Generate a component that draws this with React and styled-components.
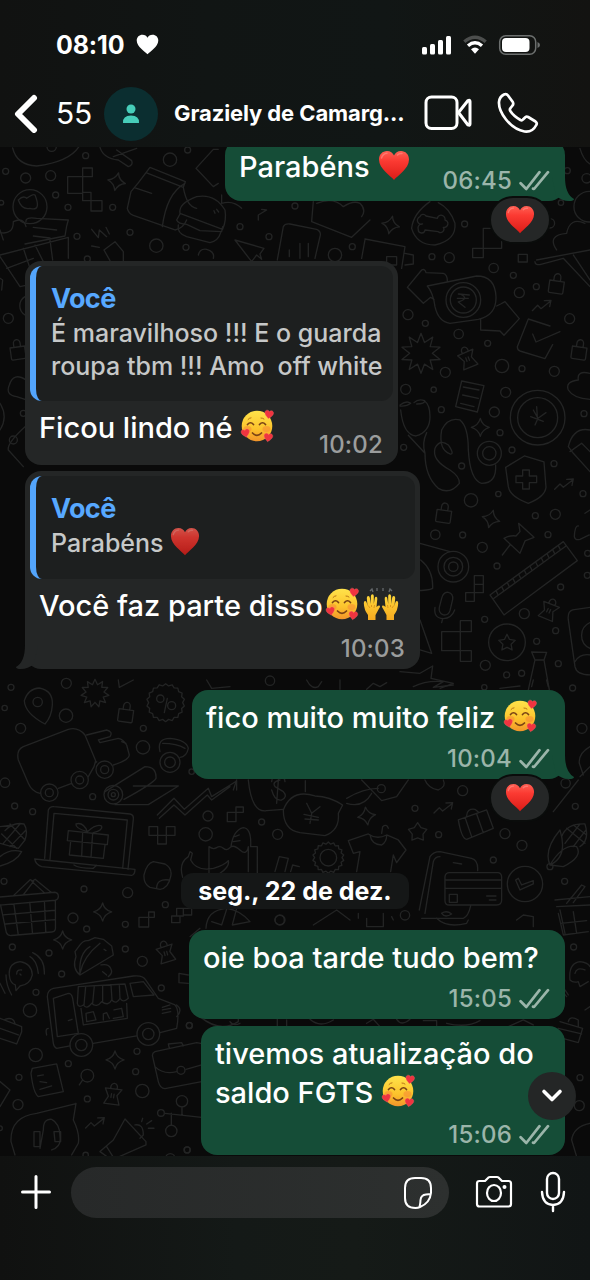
import styled, { createGlobalStyle } from "styled-components";

const GlobalStyle = createGlobalStyle`
  * {
    box-sizing: border-box;
  }
  body {
    margin: 0;
    background: #0a0a0a;
    font-family: Inter, "Noto Sans", sans-serif;
    color: white;
  }
  svg {
    display: block;
    flex: none;
  }
`;

const Screen = styled.div`
  width: 590px;
  height: 1280px;
  display: flex;
  flex-direction: column;
  overflow: hidden;
`;

const Header = styled.header`
  height: 147px;
  background: linear-gradient(90deg, #111211 0%, #111514 35%, #111615 65%, #131311 100%);
`;
const StatusBar = styled.div`
  height: 78px;
  padding: 11px 49px 0 56px;
  display: flex;
  align-items: center;
`;
const Clock = styled.span`
  width: 80px;
  font-size: 25px;
  font-weight: 700;
  letter-spacing: -0.15px;
`;
const StatusIcons = styled.div`
  margin-left: auto;
  display: flex;
  align-items: center;
  gap: 11px;
`;
const NavBar = styled.div`
  height: 69px;
  padding: 0 38px 0 14px;
  display: flex;
  align-items: center;
`;
const UnreadCount = styled.span`
  width: 49px;
  margin-left: 17px;
  font-size: 30px;
  letter-spacing: -0.2px;
`;
const Avatar = styled.div`
  width: 54px;
  height: 54px;
  margin: 2px 0 0 -1px;
  border-radius: 50%;
  background: #0b2e30;
  display: flex;
  align-items: center;
  justify-content: center;
`;
const ContactName = styled.h1`
  width: 236px;
  margin: 0 14px 0 16px;
  font-size: 22px;
  font-weight: 700;
  letter-spacing: -0.1px;
  white-space: nowrap;
`;

const Chat = styled.main`
  position: relative;
  height: 1009px;
  overflow: hidden;
  background: #0a0a0a;
`;
const Backdrop = styled.svg`
  position: absolute;
  top: -147px;
  left: 0;
  fill: none;
  stroke: #232424;
  stroke-width: 4;
  stroke-linecap: round;
  stroke-linejoin: round;
`;
const Messages = styled.div`
  position: relative;
  padding: 0 25px;
  display: flex;
  flex-direction: column;
`;
const Bubble = styled.div`
  position: relative;
  width: ${(props) => props.$width}px;
  height: ${(props) => props.$height}px;
  margin-top: ${(props) => props.$gap}px;
  align-self: ${(props) => (props.$sent ? "flex-end" : "flex-start")};
  background: ${(props) => (props.$sent ? "#154d37" : "#242626")};
  border-radius: 16px;
  padding: ${(props) => (props.$sent ? "0" : "5px 5px 0")};
  display: flex;
  flex-direction: column;
`;
const Body = styled.div`
  flex: 1;
  display: flex;
  flex-direction: ${(props) => (props.$inline ? "row" : "column")};
  justify-content: space-between;
  padding: ${(props) => (props.$sent ? "8px 15px 5px 14px" : "7px 10px 5px 9px")};
`;
const Text = styled.p`
  margin: 0;
  font-size: ${(props) => props.$size || 29}px;
  line-height: 39px;
  font-weight: 500;
  letter-spacing: ${(props) => props.$spacing || 0}px;
  white-space: pre;
`;
const Meta = styled.div`
  align-self: flex-end;
  display: flex;
  align-items: center;
  gap: 7px;
  height: 30px;
  line-height: 30px;
  font-size: 24px;
  font-weight: 500;
  letter-spacing: 0.2px;
  color: ${(props) => (props.$sent ? "#9bb5aa" : "#9b9d9d")};
`;
const Quote = styled.div`
  height: ${(props) => props.$height}px;
  padding: 14px 0 0 15px;
  border-left: 6px solid #53a5fc;
  border-radius: 12px;
  background: #1d1f1f;
`;
const QuoteAuthor = styled.div`
  font-size: 27px;
  line-height: 37px;
  font-weight: 700;
  letter-spacing: -0.6px;
  color: #57a8ff;
`;
const QuoteText = styled.div`
  font-size: 25px;
  line-height: 33px;
  font-weight: 500;
  letter-spacing: ${(props) => props.$spacing || 0}px;
  color: #c6c8c8;
  white-space: pre;
`;
const Reaction = styled.div`
  position: absolute;
  right: 14px;
  top: calc(100% - 5px);
  width: 62px;
  height: 48px;
  border: 2px solid #0a0c0b;
  border-radius: 24px;
  background: #252727;
  display: flex;
  align-items: center;
  justify-content: center;
`;
const SentTail = styled.svg`
  position: absolute;
  right: -9px;
  bottom: 0;
  fill: #154d37;
`;
const ReceivedTail = styled.svg`
  position: absolute;
  left: -9px;
  bottom: 0;
  fill: #242626;
`;
const DateChip = styled.div`
  align-self: center;
  width: 228px;
  height: 36px;
  margin: 94px 0 0;
  border-radius: 12px;
  background: #151717;
  line-height: 36px;
  text-align: center;
  font-size: 25px;
  font-weight: 700;
  letter-spacing: 0;
  white-space: nowrap;
`;
const ScrollDown = styled.button`
  position: absolute;
  right: 14px;
  top: 925px;
  width: 48px;
  height: 48px;
  padding: 0;
  border: none;
  border-radius: 50%;
  background: #242626;
  display: flex;
  align-items: center;
  justify-content: center;
`;
const InlineIcon = styled.span`
  display: inline-block;
  vertical-align: ${(props) => props.$drop || -5}px;
  opacity: ${(props) => (props.$dim ? 0.8 : 1)};
  margin-left: ${(props) => props.$left || 0}px;
`;

const Composer = styled.footer`
  height: 124px;
  padding: 11px 24px 0 20px;
  display: flex;
  align-items: flex-start;
  background: linear-gradient(90deg, #101110 0%, #141917 40%, #151a17 60%, #111515 100%);
`;
const Field = styled.div`
  width: 378px;
  height: 51px;
  margin: 0 26px 0 19px;
  padding-right: 16px;
  border-radius: 26px;
  background: linear-gradient(90deg, #272929, #2d302f);
  display: flex;
  align-items: center;
  justify-content: flex-end;
`;
const Tool = styled.div`
  height: 50px;
  margin-right: ${(props) => props.$right || 0}px;
  display: flex;
  align-items: center;
`;

const heartPath = "M16 30C13 26 1 19 1 9.5C1 4.5 4.5 1 9 1C12.3 1 14.8 2.8 16 5.5C17.2 2.8 19.7 1 23 1C27.5 1 31 4.5 31 9.5C31 19 19 26 16 30Z";

const Heart = ({ size = 32 }) => (
  <svg width={size} height={size} viewBox="0 0 32 32" role="img" aria-label="❤️">
    <defs>
      <linearGradient id="heartFill" x1="0" y1="0" x2="0" y2="1">
        <stop offset="0" stopColor="#ff6054" />
        <stop offset="0.35" stopColor="#fb3a32" />
        <stop offset="1" stopColor="#dc1c17" />
      </linearGradient>
    </defs>
    <path d={heartPath} fill="url(#heartFill)" />
    <path d="M3.5 8Q5 3.5 9 3.3M19.5 5Q21 3.3 24 3.5" stroke="#ff9189" strokeWidth="1.5" fill="none" strokeLinecap="round" opacity=".6" />
  </svg>
);

const LovingFace = () => (
  <svg width="34" height="34" viewBox="0 0 34 34" role="img" aria-label="🥰">
    <defs>
      <linearGradient id="faceFill" x1="0" y1="0" x2="0" y2="1">
        <stop offset="0" stopColor="#ffe34b" />
        <stop offset="0.6" stopColor="#fcc32c" />
        <stop offset="1" stopColor="#f2942a" />
      </linearGradient>
    </defs>
    <circle cx="17" cy="17" r="15.3" fill="url(#faceFill)" />
    <ellipse cx="7.5" cy="20" rx="4" ry="3" fill="#f77c37" opacity=".45" />
    <ellipse cx="26.5" cy="20" rx="4" ry="3" fill="#f77c37" opacity=".45" />
    <path d="M7.5 15.5Q10.5 12 13.5 15.5M19.5 15.5Q22.5 12 25.5 15.5M12.5 24Q17 28.5 21.5 24" stroke="#7a4315" strokeWidth="1.7" fill="none" strokeLinecap="round" />
    <path d="M8 10.5Q9 9 11 8.8M21 9Q23 9 24 10" stroke="#b87316" strokeWidth="1" fill="none" strokeLinecap="round" />
    <g fill="#ef3440" stroke="#ff7670" strokeWidth="1">
      <path d={heartPath} transform="translate(25 .5) rotate(8) scale(.29)" />
      <path d={heartPath} transform="translate(.3 21) rotate(-12) scale(.28)" />
      <path d={heartPath} transform="translate(24.2 23.5) rotate(8) scale(.29)" />
    </g>
  </svg>
);

const RaisedHands = () => (
  <svg width="36" height="34" viewBox="0 0 36 34" role="img" aria-label="🙌">
    <defs>
      <linearGradient id="handFill" x1="0" y1="0" x2="0" y2="1">
        <stop offset="0" stopColor="#ffd83b" />
        <stop offset="1" stopColor="#f5a91f" />
      </linearGradient>
      <g id="hand">
        <path d="M5 33V28Q1 23 .8 16Q.8 14 2.2 14Q3.4 14 3.8 16L4.5 19L3.8 11Q3.8 9 5.3 9Q6.6 9 6.9 11L7.6 17L7.9 9Q8.1 7.3 9.4 7.3Q10.8 7.4 10.8 9L10.8 17L11.8 11Q12.2 9.6 13.3 9.8Q14.5 10 14.3 12L13.5 20L15 18.8Q16.5 18 17 19Q17.3 20 15.8 22L12.5 28V33Z" fill="url(#handFill)" />
        <path d="M5.2 18.5L7 21M8.5 18V20M11.5 18L11 21" stroke="#d58c17" strokeWidth=".8" fill="none" />
      </g>
    </defs>
    <use href="#hand" />
    <use href="#hand" transform="translate(36 0) scale(-1 1)" />
    <path d="M7 4L9 2L10 5M14 1V4M20 4V1M26 5L27 2L29 4" stroke="#65696c" strokeWidth="1.3" fill="none" />
  </svg>
);

const Ticks = () => (
  <svg width="31" height="22" viewBox="0 0 31 22" fill="none" stroke="currentColor" strokeWidth="2.7" strokeLinecap="round" strokeLinejoin="round">
    <path d="M1.6 13.2L7.3 19L20.5 2.2M14 18.7L15 19L29 2.2" />
  </svg>
);

const Dots = ({ items }) => items.map(([x, y, r]) => <circle key={`${x}-${y}`} cx={x} cy={y} r={r} />);

const star = (cx, cy, points, outer, inner) => {
  let d = "";
  for (let i = 0; i < points * 2; i++) {
    const r = i % 2 ? inner : outer;
    const a = (Math.PI * i) / points - Math.PI / 2;
    d += `${i ? "L" : "M"}${(cx + r * Math.cos(a)).toFixed(1)} ${(cy + r * Math.sin(a)).toFixed(1)}`;
  }
  return d + "Z";
};

const at = (x, y, r = 0) => `translate(${x} ${y}) rotate(${r})`;

const Sparkle = ({ x, y, r }) => (
  <path transform={at(x, y, r)} d="M0-27Q5-6 27 0Q6 6 0 27Q-6 6-27 0Q-6-6 0-27Z" />
);
const Lock = ({ x, y, r = 8 }) => (
  <path transform={at(x, y, r)} d="M-22-9H22V24Q22 28 18 28H-18Q-22 28-22 24ZM-10-9V-20A10 11 0 0 1 10-20V-9" />
);
const Clip = ({ x, y, r = 10 }) => (
  <path transform={at(x, y, r)} d="M-25-17L25-20L13 0L24 27L-22 29L-12 6ZM-9-19A10 12 0 1 1 10-20M-4-3V8M4-3V8" />
);
const Trend = ({ x, y }) => <path transform={at(x, y)} d="M-28 14L-12-2L-2 8L26-14M8-16L28-17L24 2" />;

const Basket = ({ x, y, r = -5 }) => (
  <path
    transform={at(x, y, r)}
    d="M-80-30H95Q105-28 105-18T95-6H-80M-70-6L-60 78Q-56 88-46 88H76Q86 88 88 78L95-6M-65 24H92M-60 52H88M-30-6L-25 88M18-6V88M62-6L58 88M-30-30L25-74L35-68L0-30M85-30L40-74L30-68L65-30"
  />
);

const DoodlesTop = () => (
  <g transform="translate(0 140) scale(.3333)">
    <Dots
      items={[
        [155, 20, 14], [257, 47, 9], [17, 94, 9], [77, 114, 15], [152, 107, 15], [167, 165, 9], [204, 202, 9],
        [338, 202, 9], [510, 59, 20], [563, 30, 9], [390, 277, 9], [231, 289, 9], [469, 317, 20], [558, 322, 9],
        [720, 260, 9], [807, 290, 9], [262, 357, 9], [25, 535, 15], [70, 820, 9], [4, 188, 7], [40, 900, 12],
        [885, 198, 9], [1210, 62, 9], [1394, 252, 9], [1005, 345, 20], [1057, 320, 9], [1296, 350, 9], [1348, 353, 15],
        [1702, 92, 9], [1760, 115, 14], [1683, 188, 8], [1650, 250, 14],
      ]}
    />
    <path d="M38 24Q50 75 110 78Q210 65 238 18M300 22Q310 55 355 60L385 80Q400 75 395 62L350 30M340 50L410 25" />
    <path d="M248 84H277V110H248ZM203 110H248V160H203ZM248 157H273V182H248ZM273 182H306V213H273Z" />
    <Sparkle x={350} y={125} r={12} />
    <path d="M450 82L556 125L550 142L438 98ZM438 98Q415 130 393 155L382 205Q385 220 400 226L525 270Q550 265 560 240M550 142Q560 200 590 205M403 143L455 160M555 130Q500 160 487 260" />
    <path d="M540 220Q535 190 590 170Q645 160 675 210Q680 240 668 268ZM540 222L530 240Q535 252 560 253L600 272L665 275L668 260M535 255Q530 280 560 290L630 308Q655 303 662 278M650 208L656 216M642 212L645 220" />
    <circle cx="90" cy="200" r="51" />
    <path d="M55 180Q70 165 80 175Q100 160 105 165Q125 215 90 205Q65 210 55 180M0 278Q40 285 40 245Q70 230 78 260M78 245Q75 230 110 235L205 240L200 258L195 288L75 312M100 262L170 270M100 288L150 294M0 345L205 292V355M70 325L105 430L60 440L0 350M105 315L130 365M150 300L158 360M20 385L100 355" />
    <path d="M275 268L295 293L298 270L320 290M318 262L328 282M275 318L298 322M312 330L345 305L370 335V362M312 330L330 362M595 345Q600 325 620 328Q645 335 640 355" />
    <path d="M655 28L640 28L588 85L640 140L655 130M665 165V190Q700 180 725 205M775 240V225L800 210L785 208M705 300L792 325L780 342L785 358L770 345L755 365ZM832 360L850 260Q855 250 870 252L950 268Q965 275 960 290L945 355M868 350V330M900 355V310M925 350V310" />
    <path d="M940 185L935 245L1055 292L1110 240M950 190Q1000 170 1030 200Q1060 180 1080 190Q1100 210 1085 230M1095 300L1085 355M1095 297L1215 320L1205 385M1160 350H1190V375H1160ZM1215 340L1240 345V372L1215 375" />
    <Sparkle x={1172} y={255} r={12} />
    <path d="M1290 185Q1240 220 1235 265Q1250 315 1305 315Q1370 300 1365 250Q1350 205 1315 188" />
    <path d="M1260 230A10 10 0 0 1 1278 228L1312 235A10 10 0 0 1 1335 240A10 10 0 0 1 1330 262A10 10 0 0 1 1315 275L1275 270A10 10 0 0 1 1255 268A12 12 0 0 1 1268 252A10 10 0 0 1 1260 230ZM1450 265V325H1505V265ZM1418 325H1450V353H1418ZM1555 343H1582V366H1555Z" />
    <circle cx="1768" cy="200" r="46" />
    <path d="M1670 330Q1640 285 1700 280Q1710 230 1755 250M1610 360L1770 330M1605 365Q1605 375 1620 374L1690 355L1770 440M1720 345L1770 420M1740 25Q1750 60 1770 72" />
    <path d="M0 270L10 300M0 415L8 420L5 450M75 470A32 32 0 0 0 75 525M78 720Q40 695 28 735Q15 765 50 770L75 778M0 790Q25 830 0 870M75 860Q20 910 25 930L70 980" />
    <Lock x={53} y={630} r={-8} />
  </g>
);

const DoodlesRight = () => (
  <g transform="translate(400 250) scale(.3333)">
    <Dots
      items={[
        [281, 54, 14], [340, 76, 9], [358, 128, 15], [409, 110, 9], [24, 194, 15], [76, 220, 9], [176, 252, 14],
        [263, 280, 9], [509, 206, 15], [306, 348, 20], [136, 367, 15], [366, 356, 9], [463, 364, 15], [17, 418, 15],
        [101, 419, 8], [317, 427, 15], [124, 479, 9], [283, 486, 15], [300, 548, 9], [336, 600, 9], [11, 592, 9],
        [185, 648, 9], [462, 641, 9], [549, 731, 9], [213, 751, 20], [295, 732, 8], [406, 797, 9], [466, 793, 15],
        [188, 855, 9], [106, 854, 14], [247, 892, 15], [444, 854, 9], [291, 948, 9], [482, 1011, 9], [373, 1091, 15],
        [254, 1108, 9], [467, 1142, 9], [410, 1174, 9], [256, 1246, 15], [320, 1275, 9], [365, 1270, 9],
        [475, 1241, 9], [552, 491, 9], [563, 910, 9], [562, 976, 9],
        [190, 150, 52], [190, 150, 39], [413, 503, 82], [413, 503, 60], [268, 610, 36], [268, 610, 20],
        [160, 950, 46], [160, 950, 28], [160, 950, 14], [321, 1177, 55],
      ]}
    />
    <path d="M82 108L230 78Q285 78 288 140Q290 195 235 208L150 220Q115 215 105 170Q100 130 82 108M102 148L92 142L70 160L22 112L65 60Q75 55 78 68L130 70Q142 74 142 92M242 208V240L300 243L312 256L358 206L315 155L302 162L290 168" />
    <path d="M175 132L208 135M172 145H205M180 132Q210 145 175 156L195 172M450 228L385 207L352 290Q352 300 360 303L435 326L458 284M398 252L408 276L480 245" />
    <path d={star(63, 310, 10, 60, 34)} />
    <Lock x={470} y={102} />
    <Lock x={538} y={300} />
    <Lock x={132} y={790} />
    <Trend x={425} y={168} />
    <Trend x={492} y={704} />
    <Clip x={202} y={325} r={-20} />
    <Clip x={447} y={1080} r={25} />
    <path d="M185 393L252 407L232 486L167 470ZM190 411L237 420M188 435L235 445M182 460L222 470M400 480L414 505L438 488M414 505L405 525M392 500L430 514M410 470L412 500" />
    <path d="M0 465Q20 450 32 460Q20 470 0 468M42 458Q55 445 74 452Q75 462 50 462M2 480Q10 555 48 558Q90 545 90 500Q90 465 74 453M25 556L75 610M80 548Q65 580 75 610Q75 680 115 715Q150 735 178 700Q180 680 150 660Q95 630 105 595Q120 565 145 585Q165 615 150 612Q115 600 125 540Q145 500 180 510Q205 530 205 600Q210 690 245 700Q290 700 287 645" />
    <Sparkle x={241} y={532} />
    <Sparkle x={273} y={807} r={15} />
    <path d="M317 652L373 618L432 636L438 712Q435 740 385 760Q330 740 325 710ZM368 660H388V678H410V698H388V717H368V698H348V678H368Z" />
    <path d="M356 820L402 862L375 873L360 910L312 865Q330 855 348 858L360 845ZM330 885L307 915M270 1035L490 875L532 932L312 1095ZM282 1045L498 888" />
    <path d="M288 1022L294 1034M305 1010L311 1022M322 998L328 1010M339 986L345 998M356 973L362 985M373 961L379 973M390 949L396 961M407 936L413 948M424 924L430 936M441 911L447 923M458 899L464 911M475 887L481 899" />
    <path d={star(321, 1179, 5, 26, 13)} />
    <path d="M223 977H250V1003H223ZM223 1003H250V1028H223ZM197 1028H223V1054H197ZM181 1112H214V1145H181ZM181 1145H125V1202H181V1145M181 1202H214V1234H181Z" />
    <path d="M125 1045Q130 1025 145 1027Q160 1030 158 1048L150 1082Q145 1097 130 1095Q115 1088 118 1072ZM105 1072Q100 1105 130 1106Q155 1105 164 1080M128 1106L125 1118" />
    <path d="M0 905L60 880L150 905M0 1020Q80 1025 98 1015Q100 960 62 930M60 1200L95 1210L60 1110M395 1206L440 1207L432 1230H405ZM405 1230L385 1320M432 1230L448 1320M0 1265L60 1270L98 1248L93 1285L160 1300L120 1315" />
    <path d="M570 370Q530 360 535 390Q495 395 505 420Q520 445 570 448M570 540Q520 530 505 590L520 610L570 665M510 605L545 580L570 605M535 828Q525 825 523 860Q525 872 540 868L568 855M570 1072L518 1080Q502 1085 505 1110L525 1250Q530 1275 570 1275M570 1118A42 42 0 0 0 570 1195M525 1235Q540 1210 570 1215M555 790L570 780" />
  </g>
);

const DoodlesLeft = () => (
  <g transform="translate(0 680) scale(.3333)">
    <Dots
      items={[
        [33, 22, 9], [14, 84, 8], [199, 10, 15], [198, 107, 20], [62, 145, 15], [113, 66, 14], [430, 145, 9],
        [429, 202, 20], [15, 308, 14], [278, 350, 9], [44, 378, 9], [98, 395, 9], [575, 275, 8], [624, 408, 15],
        [785, 426, 9], [617, 463, 20], [833, 463, 15], [12, 604, 9], [252, 627, 9], [383, 638, 15], [219, 714, 15],
        [260, 747, 9], [376, 733, 9], [496, 674, 9], [839, 720, 14], [37, 801, 9], [147, 819, 9], [376, 807, 9],
        [427, 844, 15], [185, 882, 9], [108, 937, 9], [90, 991, 20], [484, 924, 9], [568, 1037, 9], [107, 1125, 20],
        [205, 1151, 9], [411, 1114, 9], [57, 1192, 9], [407, 1175, 9], [427, 1233, 20], [54, 1274, 15],
        [262, 1257, 9], [262, 1187, 19], [561, 1410, 9], [0, 1345, 7], [257, 1425, 8],
        [148, 338, 26], [148, 338, 12], [239, 300, 26], [239, 300, 12], [314, 269, 26], [314, 269, 12],
        [340, 344, 28], [340, 344, 16], [340, 344, 6], [510, 247, 30], [510, 247, 16],
        [244, 1095, 34], [244, 1095, 17], [445, 1062, 34], [445, 1062, 17],
        [481, 56, 11], [515, 77, 12], [546, 1264, 17], [483, 1299, 10], [514, 1353, 17], [543, 1171, 12], [511, 1435, 14],
      ]}
    />
    <path d="M135 132Q75 100 73 62Q85 25 118 24Q160 32 157 75Q155 110 135 132ZM502 55L493 98M355 0L358 22L400 0" />
    <path d={star(285, 40, 11, 42, 27)} />
    <path d={star(497, 68, 18, 57, 51)} />
    <Lock x={378} y={98} />
    <path d="M120 340Q95 335 85 310L55 240Q48 210 70 200L205 148Q235 140 255 165L287 242L282 260L265 290M175 325L215 310M260 165L320 150Q340 155 330 170L295 180L300 188L355 175Q370 178 380 195L388 225Q388 240 340 255M290 245L285 250M365 185L378 190" />
    <path d="M480 215Q470 175 510 175Q560 180 565 205Q560 230 540 232M488 190Q530 190 555 205M315 335L435 260Q470 260 468 295Q460 310 372 358M400 318H535L445 374H345" />
    <path d="M472 405L522 355L553 388L625 325L635 350L710 303V330M478 415L522 375L555 405L622 345L635 360L690 320" />
    <path d="M134 535L145 390Q150 378 162 380L390 402Q402 405 400 418L384 568M150 538L162 400L382 420L368 565M104 537L405 568Q405 585 395 586L125 560Q107 555 104 537ZM222 555Q235 565 280 565L290 556" />
    <path d="M205 452L325 465L322 494L202 482ZM212 484L208 525L310 535L315 495M248 457L245 530M278 460L273 533M262 455Q225 445 228 432Q250 425 262 455Q290 430 305 438Q310 450 280 458" />
    <path d="M447 440H473V466H447ZM499 440H525V466H499ZM473 466H499V492H473ZM682 397H708V425H682ZM708 381H730V397H708ZM417 712H446V741H417ZM446 696H463V712H446ZM515 708H540V728H515ZM530 685H550V708H530ZM550 685H575V705H550Z" />
    <path d="M460 545L495 552Q518 565 512 590Q505 625 480 628L450 622Q430 612 432 585Q440 550 460 545M470 625Q470 595 508 600M548 592Q535 550 565 530L570 515L577 520L572 540Q590 575 640 565Q675 555 685 542Q690 560 660 580M627 580V500Q640 510 650 503T670 505T690 503T720 510T745 500V575M755 500H772V580M693 500Q700 450 730 443Q755 445 752 500M705 470L718 465M700 485L720 482M825 575L838 530L865 535L855 575M872 575L878 555L898 560" />
    <Basket x={72} y={675} />
    <path d="M0 440L40 435M15 452Q40 425 72 432Q85 450 75 480L55 505L0 490M30 432L75 480M5 462L50 505M60 432L10 490M78 450L30 500M0 530Q30 505 65 515Q50 545 0 558" />
    <Sparkle x={308} y={696} />
    <Sparkle x={188} y={780} />
    <Sparkle x={345} y={1140} />
    <path d="M240 885Q215 865 228 830L225 815L240 795Q250 780 265 782L285 773L310 778L335 798L340 825ZM240 885Q235 820 270 800M240 880Q250 830 300 790M312 808L318 812M303 855Q325 850 332 865Q340 880 325 890M308 875L320 885" />
    <path d="M28 885Q25 850 60 845Q95 850 97 885Q90 915 60 918L48 932L46 915Q30 910 28 885ZM50 882Q50 868 65 870M60 882L63 885M90 830Q110 840 115 880M98 818Q135 835 133 882M18 885Q18 915 35 945M0 910L15 940" />
    <Clip x={497} y={818} r={-15} />
    <Clip x={338} y={1245} />
    <path d="M210 1098L170 1105Q162 1102 160 1090L142 950Q142 930 160 925L400 888Q430 885 437 900L475 955L525 975Q540 990 530 1045L480 1058M280 1090L410 1068M160 955L205 940Q215 940 218 955L235 1060L172 1070ZM205 1022L216 1018M390 910L430 905L462 945L400 950ZM235 920L375 912L385 955Q370 970 360 955Q350 975 335 960Q325 980 305 965Q290 985 275 970Q260 990 250 975Q235 985 232 970ZM257 920L252 975M283 918L278 970M308 916V965M333 914L336 960M358 913L360 955M243 985L250 1035L382 1015L380 970M258 1000L280 995L288 1020L260 1025ZM310 1020V1002L320 998L328 1015M342 990L365 985L370 1010L340 1015M487 982L510 975M487 990L512 985M487 1000L512 995M530 975Q550 990 530 1010M140 1065Q135 1045 145 1045" />
    <path d="M0 1015L65 1040V1055L50 1092L0 1075M15 1018Q40 1010 45 1030M0 1045L55 1065M458 1130Q455 1120 465 1115L590 1088L610 1092M458 1130L475 1205Q480 1225 495 1226L605 1205M465 1160Q490 1185 530 1175M558 1168L605 1155M508 1105L505 1092L545 1088L550 1098" />
    <path d="M97 1165L170 1152L190 1235L115 1250Q100 1240 93 1180ZM113 1188L130 1185M120 1205L140 1208M120 1228L155 1218M248 1200L238 1215M0 1205L30 1230L0 1280M228 1270L220 1320Q240 1360 235 1390L215 1425M225 1272L110 1300Q30 1310 33 1385L45 1425M120 1405L130 1350Q130 1315 155 1318Q180 1330 180 1370Q185 1400 155 1410M102 1355H120V1400H102ZM162 1355H182V1385H165Z" />
    <Trend x={285} y={1330} />
    <path d="M300 1415L340 1380L375 1317L438 1385V1395L335 1440L300 1415M320 1400L345 1440M405 1335Q430 1330 430 1365L420 1375M425 1325L428 1315M440 1332L455 1322M445 1345H462M495 1300L605 1312M546 1282V1305M514 1300V1335" />
    <path d="M710 300L700 330M745 300Q755 400 800 392L850 388M618 745Q620 690 680 685Q720 690 750 725L697 735L710 685M680 688L665 735L635 725M570 770L600 745M565 885L537 880V908L565 910M600 1010Q660 1060 715 1025V1015M832 1015V1040" />
  </g>
);

const DoodlesBottom = () => (
  <g transform="translate(180 680) scale(.3333)">
    <Dots
      items={[
        [604, 326, 12], [848, 332, 15], [705, 385, 9], [776, 464, 9], [975, 461, 15], [1026, 496, 15], [1186, 379, 9],
        [1206, 145, 15], [1157, 310, 14], [1178, 24, 9], [940, 540, 9], [1154, 604, 9], [675, 706, 14], [445, 533, 25],
        [1035, 612, 53], [1181, 801, 9], [28, 1036, 9], [1200, 1193, 9], [1198, 1277, 15], [300, 720, 15], [1110, 560, 9],
        [913, 22, 8], [270, 2, 14], [22, 1410, 9],
      ]}
    />
    <path d={star(445, 533, 18, 47, 41)} />
    <path d={star(713, 457, 5, 29, 17)} />
    <path d="M275 305Q275 285 295 285Q315 290 315 305M275 330Q285 365 305 360Q325 350 310 335L285 320Q275 305 300 300M297 275L290 370M376 302V335M488 375Q450 350 405 348Q335 325 310 390Q310 450 360 458L435 467Q480 450 475 400ZM380 370L395 400L420 380M372 403L415 412M375 417L415 420M395 400L390 430M500 355Q550 325 595 325M500 370Q550 385 575 340M545 300L605 362L650 350L685 300M735 300Q745 325 775 330Q800 320 790 300" />
    <Sparkle x={560} y={408} r={-8} />
    <Trend x={790} y={385} />
    <path d="M505 482L565 462Q590 480 620 465L655 480L678 510L650 548L640 525L632 575M505 482L520 520L540 515L530 575M570 465Q575 495 605 495Q620 485 620 467M605 460L608 440Q620 430 625 445M835 420L920 390L940 445L860 478Q845 478 835 420ZM855 412L875 470M890 402L910 458M860 408Q860 385 885 388L895 396" />
    <path d="M718 690L750 530Q760 515 780 515L875 535Q895 540 893 572M735 700L760 545Q765 530 780 530M795 590Q797 578 808 578H955Q965 580 965 592V660Q965 675 950 675H808Q795 675 795 662ZM797 600H963M797 625H963M808 643H832V667H808ZM920 648H948M928 660H948M820 548L845 552M725 715H850Q865 710 872 678M785 700Q800 690 815 702Q795 715 785 700M1007 600L1015 595L1025 615L1060 602V612L1020 630Z" />
    <path d="M1110 555Q1090 510 1140 450Q1165 530 1110 555M1110 555Q1150 490 1190 500Q1210 530 1150 560ZM1145 470Q1160 430 1215 432Q1230 480 1200 500M1160 445L1215 490M1180 435L1220 465M1200 432L1155 490M1218 450L1180 500M1195 300L1120 395M1200 290L1230 260M1230 200Q1195 220 1198 250L1210 285" />
    <path d="M1125 660L1230 650M1130 680L1230 675M1140 690L1155 760M1160 670L1205 615L1215 620L1180 668M1010 720L1030 705L1060 710V740M1135 700L1150 765L1225 755M1180 695L1190 760M1143 730L1220 722M400 735L470 690L510 720M535 700V715M560 715V740H610V700M640 720L635 710M770 715Q800 745 860 730L865 720" />
    <path d="M80 0L95 25L150 20M380 0Q395 30 415 20L425 5M480 0V28M560 28L580 10L600 20L620 8M700 20Q740 0 790 5L760 22L820 15M960 25L1020 18M1055 20L1060 0M1105 20L1100 0M150 1025Q160 1040 180 1030M320 1020V1045M390 1018Q420 1045 460 1020M560 1030L580 1018L600 1040M650 1018Q665 1040 690 1018M730 1022H770V1045M800 1030Q860 1045 900 1022M985 1040L1030 1020L1060 1035" />
    <path d="M1170 900Q1165 850 1200 845Q1225 848 1230 860M1170 900Q1180 910 1195 905L1200 920L1225 905M1185 880Q1190 860 1215 870M1165 945L1155 930M1160 950Q1130 920 1140 850M1140 1025L1208 1045L1195 1088L1120 1068M1165 1025Q1170 1005 1195 1020V1040M1135 1045L1205 1062M1230 1330Q1180 1340 1175 1380L1190 1430M1215 990L1230 980" />
  </g>
);

const Wallpaper = () => (
  <Backdrop width="590" height="1280" viewBox="0 0 590 1280">
    <DoodlesTop />
    <DoodlesRight />
    <DoodlesLeft />
    <DoodlesBottom />
  </Backdrop>
);

const Tail = () => (
  <SentTail width="22" height="24" viewBox="0 0 22 24">
    <path d="M0 0H13Q13 17 22 22Q22 24 17 24Q10 24 4 19Z" />
  </SentTail>
);

const Sent = ({ width, height, gap, time, reaction, tail, inline, children }) => (
  <Bubble $sent $width={width} $height={height} $gap={gap}>
    {tail && <Tail />}
    <Body $sent $inline={inline}>
      {children}
      <Meta $sent>
        {time}
        <Ticks />
      </Meta>
    </Body>
    {reaction && (
      <Reaction>
        <Heart size={30} />
      </Reaction>
    )}
  </Bubble>
);

const App = () => {
  return (
    <Screen>
      <GlobalStyle />
      <Header>
        <StatusBar>
          <Clock>08:10</Clock>
          <svg width="23" height="21" viewBox="0 0 32 31" fill="white" preserveAspectRatio="none">
            <path d={heartPath} />
          </svg>
          <StatusIcons>
            <svg width="31" height="20" viewBox="0 0 31 20" fill="white">
              <rect x="1" y="12" width="5" height="7.5" rx="1.5" />
              <rect x="9" y="9" width="5" height="10.5" rx="1.5" />
              <rect x="17" y="5" width="5" height="14.5" rx="1.5" />
              <rect x="25" y="1" width="5" height="18.5" rx="1.5" />
            </svg>
            <svg width="24" height="20" viewBox="0 0 24 20" fill="none" strokeWidth="3.4">
              <path d="M1.3 6.8Q12-2.3 22.7 6.8" stroke="#4c4e4d" />
              <path d="M5 10.8Q12 4.9 19 10.8" stroke="white" />
              <path d="M8 14.2Q12 11 16 14.2L12 18.8Z" fill="white" />
            </svg>
            <svg width="43" height="20" viewBox="0 0 43 20" fill="none">
              <rect x="1.7" y=".8" width="36" height="18.4" rx="6" stroke="#6c6f6e" strokeWidth="1.5" />
              <rect x="4" y="3" width="27.5" height="14" rx="4" fill="white" />
              <path d="M39.5 7Q42 8 42 10T39.5 13Z" fill="#6c6f6e" />
            </svg>
          </StatusIcons>
        </StatusBar>
        <NavBar>
          <svg width="25" height="40" viewBox="0 0 25 40" fill="none" stroke="white" strokeWidth="6" strokeLinecap="round" strokeLinejoin="round">
            <path d="M20 6L4 22L20 38" transform="translate(0 -1)" />
          </svg>
          <UnreadCount>55</UnreadCount>
          <Avatar>
            <svg width="18" height="20" viewBox="0 0 18 20" fill="#47cdb9">
              <circle cx="9" cy="5" r="4.5" />
              <path d="M1 19Q.5 11.5 9 11.5T17 19Z" />
            </svg>
          </Avatar>
          <ContactName>Graziely de Camarg...</ContactName>
          <svg width="48" height="36" viewBox="0 0 48 36" fill="none" stroke="white" strokeWidth="3" strokeLinejoin="round">
            <rect x="2" y="2" width="31" height="31.5" rx="5.5" />
            <path d="M34.5 17.5L44 5.5Q46 4.5 46 6.5V29Q46 31 44 30Z" />
          </svg>
          <svg width="42" height="42" viewBox="0 0 42 42" fill="none" stroke="white" strokeWidth="2.7" strokeLinejoin="round" style={{ marginLeft: "25px" }}>
            <path d="M7 2.5Q9.5 1.5 11 3.5L15.8 10Q16.8 12 15.5 13.5L13.2 16.5Q12.5 17.8 13.3 19Q16.5 24 23.5 28Q25 28.7 26 27.5L28.3 25.2Q29.5 24.2 31.2 25L38.5 29.5Q40.5 31 39.3 33Q35.5 40.5 27.5 39.5Q17 37.5 9 27.5Q1.5 18 2 10Q2.3 5 7 2.5Z" />
          </svg>
        </NavBar>
      </Header>

      <Chat>
        <Wallpaper />
        <Messages>
          <Sent width={340} height={62} gap={-8} time="06:45" reaction tail inline>
            <Text>
              Parabéns{" "}
              <InlineIcon $left={1}>
                <Heart size={32} />
              </InlineIcon>
            </Text>
          </Sent>

          <Bubble $width={373} $height={204} $gap={60}>
            <Quote $height={135}>
              <QuoteAuthor>Você</QuoteAuthor>
              <QuoteText>É maravilhoso !!! E o guarda</QuoteText>
              <QuoteText>roupa tbm !!! Amo  off white</QuoteText>
            </Quote>
            <Body $inline>
              <Text>
                Ficou lindo né{" "}
                <InlineIcon>
                  <LovingFace />
                </InlineIcon>
              </Text>
              <Meta>10:02</Meta>
            </Body>
          </Bubble>

          <Bubble $width={395} $height={198} $gap={6}>
            <ReceivedTail width="22" height="24" viewBox="0 0 22 24">
              <path d="M22 0H9Q9 17 0 22Q0 24 5 24Q12 24 18 19Z" />
            </ReceivedTail>
            <Quote $height={103}>
              <QuoteAuthor>Você</QuoteAuthor>
              <QuoteText>
                Parabéns{" "}
                <InlineIcon $dim>
                  <Heart size={30} />
                </InlineIcon>
              </QuoteText>
            </Quote>
            <Body>
              <Text>
                Você faz parte disso
                <InlineIcon $left={2}>
                  <LovingFace />
                </InlineIcon>
                <InlineIcon $left={4}>
                  <RaisedHands />
                </InlineIcon>
              </Text>
              <Meta>10:03</Meta>
            </Body>
          </Bubble>

          <Sent width={373} height={89} gap={21} time="10:04" reaction tail>
            <Text>
              fico muito muito feliz{" "}
              <InlineIcon>
                <LovingFace />
              </InlineIcon>
            </Text>
          </Sent>

          <DateChip>seg., 22 de dez.</DateChip>

          <Sent width={376} height={89} gap={21} time="15:05">
            <Text>oie boa tarde tudo bem?</Text>
          </Sent>
          <Sent width={364} height={129} gap={7} time="15:06">
            <Text>
              tivemos atualização do{"\n"}saldo FGTS{" "}
              <InlineIcon>
                <LovingFace />
              </InlineIcon>
            </Text>
          </Sent>
        </Messages>
        <ScrollDown>
          <svg width="22" height="16" viewBox="0 0 22 16" fill="none" stroke="white" strokeWidth="3.6" strokeLinecap="round" strokeLinejoin="round">
            <path d="M3 3.5L11 11.5L19 3.5" />
          </svg>
        </ScrollDown>
      </Chat>

      <Composer>
        <Tool>
          <svg width="32" height="36" viewBox="0 0 32 36" fill="none" stroke="white" strokeWidth="3" strokeLinecap="round">
            <path d="M16 2.5V33.5M2.5 18H29.5" />
          </svg>
        </Tool>
        <Field>
          <svg width="30" height="34" viewBox="0 0 30 34" fill="none" stroke="white" strokeWidth="2" strokeLinejoin="round">
            <path d="M12.5 32Q2 32 2 22V12Q2 2 12 2H18Q28 2 28 12V17Q27 27 17 31Q15 32 12.5 32ZM16.5 31Q17.5 27 17.5 24Q18 19 23 18.5L28 18" />
          </svg>
        </Field>
        <Tool $right={27}>
          <svg width="38" height="34" viewBox="0 0 38 34" fill="none" stroke="white" strokeWidth="2.2" strokeLinejoin="round">
            <path d="M4.5 6H10L13.5 2.5Q14 2 15 2H22Q23 2 23.5 2.5L27 6H33.5Q36 6 36 8.5V29Q36 31.5 33.5 31.5H4.5Q2 31.5 2 29V8.5Q2 6 4.5 6Z" />
            <ellipse cx="19" cy="18" rx="7" ry="8" />
            <circle cx="29.5" cy="12" r="2" fill="white" stroke="none" />
          </svg>
        </Tool>
        <Tool>
          <svg width="26" height="42" viewBox="0 0 26 42" fill="none" stroke="white" strokeWidth="2.4" strokeLinecap="round">
            <rect x="7" y="2" width="12" height="26" rx="6" />
            <path d="M2 21Q2.5 33.5 13 34Q23.5 33.5 24 21M13 34V40" />
          </svg>
        </Tool>
      </Composer>
    </Screen>
  );
};

export default App;
